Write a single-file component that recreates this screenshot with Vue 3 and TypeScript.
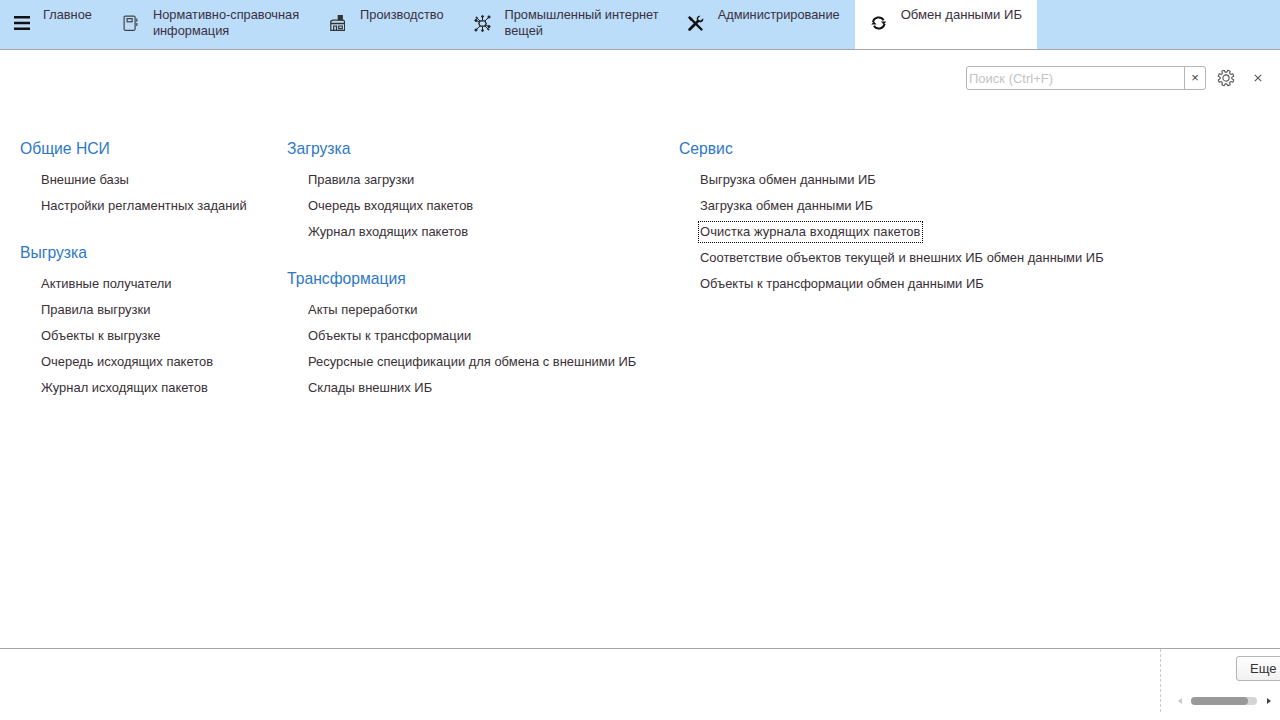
<script setup lang="ts">
interface Group { title: string; items: string[] }
const columns: Group[][] = [
  [
    { title: 'Общие НСИ', items: ['Внешние базы', 'Настройки регламентных заданий'] },
    { title: 'Выгрузка', items: ['Активные получатели', 'Правила выгрузки', 'Объекты к выгрузке', 'Очередь исходящих пакетов', 'Журнал исходящих пакетов'] },
  ],
  [
    { title: 'Загрузка', items: ['Правила загрузки', 'Очередь входящих пакетов', 'Журнал входящих пакетов'] },
    { title: 'Трансформация', items: ['Акты переработки', 'Объекты к трансформации', 'Ресурсные спецификации для обмена с внешними ИБ', 'Склады внешних ИБ'] },
  ],
  [
    { title: 'Сервис', items: ['Выгрузка обмен данными ИБ', 'Загрузка обмен данными ИБ', 'Очистка журнала входящих пакетов', 'Соответствие объектов текущей и внешних ИБ обмен данными ИБ', 'Объекты к трансформации обмен данными ИБ'] },
  ],
]
const focused = 'Очистка журнала входящих пакетов'

function gearPath(): string {
  const pts: string[] = []
  const at = (r: number, deg: number): string => {
    const a = (deg * Math.PI) / 180
    return `${(9 + r * Math.cos(a)).toFixed(2)} ${(9 + r * Math.sin(a)).toFixed(2)}`
  }
  for (let k = 0; k < 8; k++) {
    const c = k * 45 + 22.5
    pts.push(at(5.9, c - 15), at(8, c - 9), at(8, c + 9), at(5.9, c + 15))
  }
  return `M${pts.join('L')}Z`
}
const gear = gearPath()
</script>

<template>
  <div class="page">
    <header class="tabs">
      <div class="tab first">
        <svg class="icon" width="16" height="16" viewBox="0 0 16 16"><path d="M0 1h16v2.400H0zM0 6.800h16v2.400H0zM0 12.600h16V15H0z" fill="#111"/></svg>
        <span class="tab-text">Главное</span>
      </div>
      <div class="tab">
        <svg class="icon" width="16" height="16" viewBox="0 0 16 16" fill="none" stroke="#444" stroke-width="1.2"><rect x="2.100" y="1.100" width="11" height="14.200" rx="1.200"/><rect x="5.100" y="3.600" width="5" height="3.200"/><path d="M14.800 3.500v3.200M14.800 8v3"/></svg>
        <span class="tab-text">Нормативно-справочная<br>информация</span>
      </div>
      <div class="tab">
        <svg class="icon" width="16" height="16" viewBox="-0.700 0 16 16" fill="none" stroke="#333" stroke-width="1.200"><path d="M8 0h5.200v5.400H8z" fill="#333" stroke="none"/><path d="M1.100 15.400V6.200L3 5.200h10.400l1.500 1v9.200z"/><path d="M1.100 8.500h13.800" stroke-width="1.500"/><path d="M4 15.400v-4.400h2.800v4.400M9 11h3.600v2.600H9z"/></svg>
        <span class="tab-text">Производство</span>
      </div>
      <div class="tab iot">
        <svg class="icon" width="17" height="17" viewBox="0 0 17 17" fill="#222" stroke="#222" stroke-width="1"><path d="M8.500 8.500 2.400 5.600M8.500 8.500 14.600 2.400M8.500 8.500 2.400 14.600M8.500 8.500 14.600 11.400M8.500 8.500V1.800M8.500 8.500V15.200M8.500 8.500 2.800 2.800M8.500 8.500 14.200 14.200" fill="none"/><path d="M6.300 5.800h4.400l1.500 2.700-1.500 2.700H6.300L4.800 8.500z" fill="#bbddf9" stroke-width="1.300"/><circle cx="2" cy="5.400" r="1.100"/><circle cx="15" cy="2" r="1.100"/><circle cx="2" cy="15" r="1.100"/><circle cx="15" cy="11.600" r="1.100"/><circle cx="8.500" cy="1.500" r=".9"/><circle cx="8.500" cy="15.500" r=".9"/><circle cx="2.600" cy="2.600" r=".6"/><circle cx="14.400" cy="14.400" r=".6"/></svg>
        <span class="tab-text">Промышленный интернет<br>вещей</span>
      </div>
      <div class="tab tools">
        <svg class="icon" width="17" height="17" viewBox="0 0 17 17" fill="none" stroke="#111"><path d="M3 3l11.500 11.500" stroke-width="2.400" stroke-linecap="round"/><path d="M1.400 2.400 2.400 1.400 5.400 3.800 3.800 5.400z" fill="#111" stroke="#111" stroke-width=".8"/><path d="M2.600 14.400l8.200-8.200" stroke-width="2.800" stroke-linecap="round"/><path d="M16.200 3.200 13.700 5.500 11.500 5.100 11.100 3 13.500.800C11 .200 9.200 2.200 9.700 4.600l2.700 2.700c2.500.5 4.400-1.500 3.800-4.100z" fill="#111" stroke="none"/></svg>
        <span class="tab-text">Администрирование</span>
      </div>
      <div class="tab active">
        <svg class="icon" width="16" height="16" viewBox="-0.800 0 16 16" fill="none" stroke="#111" stroke-width="2"><path d="M2.200 7.200A5.800 5.800 0 0 1 12.800 5.200"/><path d="M13.800 8.800A5.800 5.800 0 0 1 3.200 10.800"/><path d="M10.200 6.400h5.400l-2.700 3.200z" fill="#111" stroke="none"/><path d="M5.800 9.600H.4l2.700-3.200z" fill="#111" stroke="none"/></svg>
        <span class="tab-text">Обмен данными ИБ</span>
      </div>
    </header>

    <main class="content">
      <div class="toolbar">
        <div class="search">
          <input class="search-input" placeholder="Поиск (Ctrl+F)" />
          <span class="search-clear">×</span>
        </div>
        <svg class="gear" width="18" height="18" viewBox="0 0 18 18" fill="none" stroke="#555" stroke-width="1.100" stroke-linejoin="round"><path :d="gear"/><circle cx="9" cy="9" r="3.100"/></svg>
        <svg class="close" width="8" height="8" viewBox="0 0 8 8" stroke="#555" stroke-width="1.100"><path d="M.8.800l6.400 6.400M7.200.800.800 7.200"/></svg>
      </div>

      <div class="columns">
        <div v-for="(col, i) in columns" :key="i" class="column">
          <section v-for="g in col" :key="g.title" class="group">
            <h2 class="group-title">{{ g.title }}</h2>
            <a v-for="item in g.items" :key="item" class="link" :class="{ focused: item === focused }">{{ item }}</a>
          </section>
        </div>
      </div>
    </main>

    <footer class="footer">
      <div class="footer-side">
        <button class="more">Еще</button>
        <div class="scroller">
          <span class="arrow left"></span>
          <div class="track"><div class="thumb"></div></div>
          <span class="arrow right"></span>
        </div>
      </div>
    </footer>
  </div>
</template>

<style>
html, body { margin: 0; background: #fff; overflow: hidden; }
</style>

<style scoped>
.page {
  width: 1280px;
  height: 720px;
  display: flex;
  flex-direction: column;
  overflow: hidden;
  font-family: "Liberation Sans", Arial, sans-serif;
  font-size: 12.95px;
  color: #333;
}
.tabs {
  height: 49px;
  flex: none;
  display: flex;
  background: #bbddf9;
  border-bottom: 1px solid #a5a5a5;
}
.tab {
  display: flex;
  align-items: flex-start;
  padding: 0 15px;
  height: 49px;
}
.tab.first { padding-left: 14px; }
.tab.iot { padding-right: 14px; }
.tab.active { background: #fff; }
.icon { flex: none; margin: 15px 15px 0 0; }
.tab.iot .icon { margin-right: 14px; }
.tab.tools .icon { margin: 15px 14px 0 -1px; }
.tab.first .icon { margin-right: 13px; }
.tab-text { padding-top: 7px; line-height: 16px; white-space: nowrap; color: #3a3040; font-size: 12.8px; }
.tab.active .tab-text { font-size: 13.1px; }
.content { flex: 1; min-height: 0; }
.toolbar {
  height: 24px;
  margin-top: 16px;
  display: flex;
  align-items: center;
  padding-left: 966px;
}
.search {
  width: 240px;
  height: 24px;
  box-sizing: border-box;
  display: flex;
  border: 1px solid #b5b5b5;
  border-radius: 3px;
}
.search-input {
  flex: 1;
  min-width: 0;
  border: 0;
  outline: 0;
  padding: 0 2px;
  font: inherit;
  font-size: 13px;
  background: transparent;
}
.search-input::placeholder { color: #c4c4c4; opacity: 1; }
.search-clear {
  width: 20px;
  flex: none;
  border-left: 1px solid #b5b5b5;
  text-align: center;
  line-height: 22px;
  font-size: 13px;
  color: #444;
}
.gear { margin-left: 11px; flex: none; }
.close { margin-left: 19px; flex: none; }
.columns {
  display: grid;
  grid-template-columns: 224px 349px auto;
  justify-content: start;
  column-gap: 43px;
  padding: 49px 0 0 20px;
}
.column { display: flex; flex-direction: column; }
.group { display: flex; flex-direction: column; align-items: flex-start; }
.group + .group { margin-top: 21px; }
.group-title {
  margin: 0;
  height: 31px;
  line-height: 20px;
  font-size: 15.7px;
  font-weight: 400;
  color: #2d78c8;
}
.link {
  height: 26px;
  line-height: 20px;
  margin-left: 21px;
  white-space: nowrap;
  box-sizing: border-box;
  color: #3a3038;
}
.link.focused {
  height: 20px;
  margin: 0 0 6px 20px;
  padding: 0 1px;
  letter-spacing: .1px;
  outline: 1px dotted #000;
}
.footer {
  height: 72px;
  flex: none;
  box-sizing: border-box;
  border-top: 1px solid #a5a5a5;
  display: flex;
  justify-content: flex-end;
}
.footer-side {
  width: 120px;
  height: 63px;
  box-sizing: border-box;
  border-left: 1px dashed #ccc;
  overflow: hidden;
}
.more {
  display: block;
  margin: 7px 0 0 75px;
  width: 70px;
  height: 25px;
  box-sizing: border-box;
  border: 1px solid #b5b5b5;
  border-radius: 3px;
  background: linear-gradient(#fff, #f1f1f1);
  font: inherit;
  font-size: 13px;
  color: #333;
  text-align: left;
  padding: 0 0 0 13px;
}
.scroller {
  display: flex;
  align-items: center;
  margin: 16px 0 0 17px;
  height: 8px;
}
.arrow { width: 0; height: 0; border-top: 3px solid transparent; border-bottom: 3px solid transparent; flex: none; }
.arrow.left { border-right: 4px solid #c8c8c8; margin-right: 9px; }
.arrow.right { border-left: 4px solid #444; margin-left: 10px; }
.track { width: 66px; height: 8px; border-radius: 4px; background: #d4d4d4; flex: none; }
.thumb { width: 57px; height: 8px; border-radius: 4px; background: #999; }
</style>
